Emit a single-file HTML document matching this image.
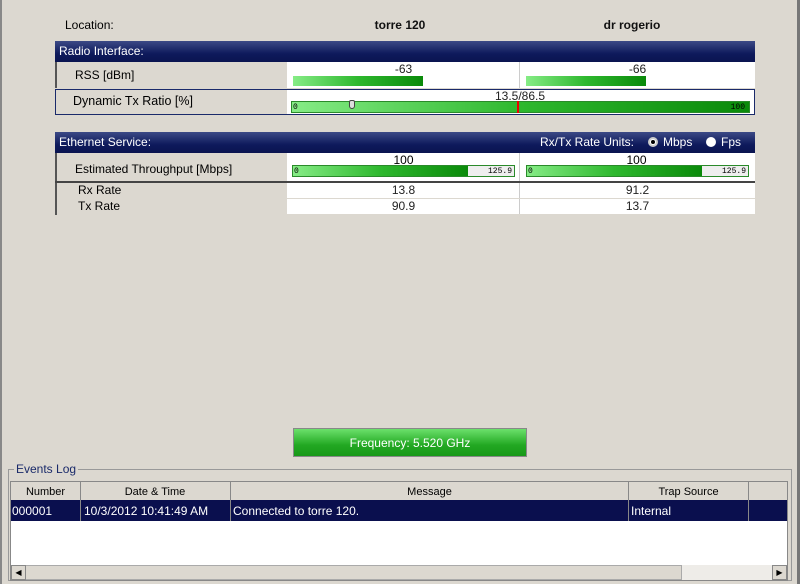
<!DOCTYPE html>
<html><head><style>
*{margin:0;padding:0;box-sizing:border-box}
body{width:800px;height:584px;background:#dcd8d0;font-family:"Liberation Sans",sans-serif;font-size:12px;color:#000;position:relative;overflow:hidden}
.a{position:absolute}
.hdr{background:linear-gradient(#3c4a86,#0e1a5c 60%,#0a1450);color:#fff;font-size:12px;padding:3px 4px}
.lbl{background:#dcd8d0;border-left:2px solid #555}
.w{background:#fff}
.bar{background:linear-gradient(90deg,#86ec86,#2eb82e 50%,#0a8a0a);border:1px solid #2a8a2a}
.c{text-align:center}
.sm{font-size:8px;font-family:"Liberation Mono",monospace}
</style></head><body>
<div class="a" style="left:0;top:0;width:2px;height:584px;background:#888"></div>
<div class="a" style="right:0;top:0;width:3px;height:584px;background:#777"></div>
<div class="a" style="left:65px;top:18px">Location:</div>
<div class="a c" style="left:300px;top:18px;width:200px;font-weight:bold;color:#111">torre 120</div>
<div class="a c" style="left:532px;top:18px;width:200px;font-weight:bold;color:#111">dr rogerio</div>

<div class="a hdr" style="left:55px;top:41px;width:700px;height:21px">Radio Interface:</div>
<div class="a lbl" style="left:55px;top:62px;width:232px;height:26px;padding:6px 0 0 18px">RSS [dBm]</div>
<div class="a w" style="left:287px;top:62px;width:233px;height:26px;border-right:1px solid #ccc"></div>
<div class="a w" style="left:520px;top:62px;width:235px;height:26px"></div>
<div class="a c" style="left:287px;top:62px;width:233px;color:#222">-63</div>
<div class="a c" style="left:520px;top:62px;width:235px;color:#222">-66</div>
<div class="a bar" style="left:293px;top:76px;width:130px;height:10px;border:none"></div>
<div class="a bar" style="left:526px;top:76px;width:120px;height:10px;border:none"></div>

<div class="a" style="left:55px;top:89px;width:700px;height:26px;border:1px solid #1a2a6a;background:#fff"></div>
<div class="a" style="left:56px;top:90px;width:231px;height:24px;background:#dcd8d0;padding:4px 0 0 17px;font-size:12.5px">Dynamic Tx Ratio [%]</div>
<div class="a c" style="left:400px;top:89px;width:240px;color:#222">13.5/86.5</div>
<div class="a bar" style="left:291px;top:101px;width:459px;height:12px"><span class="sm a" style="left:1px;top:1px">0</span><span class="sm a" style="right:4px;top:1px">100</span></div>
<div class="a" style="left:517px;top:101px;width:2px;height:12px;background:#e00;z-index:3"></div>
<div class="a" style="left:349px;top:100px;width:6px;height:9px;background:#ddd;border:1px solid #444;border-radius:2px 2px 3px 3px"></div>

<div class="a hdr" style="left:55px;top:132px;width:700px;height:21px">Ethernet Service:</div>
<div class="a" style="left:540px;top:135px;color:#fff">Rx/Tx Rate Units:</div>
<div class="a" style="left:648px;top:137px;width:10px;height:10px;border-radius:50%;background:#fff;border:2px solid #ccc"><div style="margin:1px;width:4px;height:4px;border-radius:50%;background:#000"></div></div>
<div class="a" style="left:663px;top:135px;color:#fff">Mbps</div>
<div class="a" style="left:706px;top:137px;width:10px;height:10px;border-radius:50%;background:#fff"></div>
<div class="a" style="left:721px;top:135px;color:#fff">Fps</div>

<div class="a lbl" style="left:55px;top:153px;width:232px;height:28px;padding:9px 0 0 18px">Estimated Throughput [Mbps]</div>
<div class="a w" style="left:287px;top:153px;width:233px;height:28px;border-right:1px solid #ccc"></div>
<div class="a w" style="left:520px;top:153px;width:235px;height:28px"></div>
<div class="a c" style="left:287px;top:153px;width:233px">100</div>
<div class="a c" style="left:520px;top:153px;width:233px">100</div>
<div class="a" style="left:292px;top:165px;width:223px;height:12px;border:1px solid #2a8a2a;background:#eee"><div class="bar" style="width:175px;height:10px;border:none"></div><span class="sm a" style="left:1px;top:1px">0</span><span class="sm a" style="right:2px;top:1px">125.9</span></div>
<div class="a" style="left:526px;top:165px;width:223px;height:12px;border:1px solid #2a8a2a;background:#eee"><div class="bar" style="width:175px;height:10px;border:none"></div><span class="sm a" style="left:1px;top:1px">0</span><span class="sm a" style="right:2px;top:1px">125.9</span></div>
<div class="a" style="left:55px;top:181px;width:700px;height:2px;background:#444"></div>

<div class="a lbl" style="left:55px;top:183px;width:232px;height:32px"></div>
<div class="a" style="left:78px;top:183px">Rx Rate</div>
<div class="a" style="left:78px;top:199px">Tx Rate</div>
<div class="a w" style="left:287px;top:183px;width:233px;height:15px;border-right:1px solid #ccc"></div>
<div class="a w" style="left:520px;top:183px;width:235px;height:15px"></div>
<div class="a w" style="left:287px;top:199px;width:233px;height:15px;border-right:1px solid #ccc"></div>
<div class="a w" style="left:520px;top:199px;width:235px;height:15px"></div>
<div class="a c" style="left:287px;top:183px;width:233px;color:#222">13.8</div>
<div class="a c" style="left:520px;top:183px;width:235px;color:#222">91.2</div>
<div class="a c" style="left:287px;top:199px;width:233px;color:#222">90.9</div>
<div class="a c" style="left:520px;top:199px;width:235px;color:#222">13.7</div>

<div class="a c" style="left:293px;top:428px;width:234px;height:29px;border:1px solid #888;background:linear-gradient(#6ce06c,#22a822 60%,#189818);color:#fff;padding-top:7px">Frequency: 5.520 GHz</div>

<div class="a" style="left:8px;top:469px;width:784px;height:112px;border:1px solid #999"></div>
<div class="a" style="left:14px;top:462px;background:#dcd8d0;padding:0 2px;color:#1a2a6a">Events Log</div>
<div class="a" style="left:10px;top:481px;width:778px;height:100px;background:#fff;border:1px solid #888"></div>
<div class="a" style="left:11px;top:482px;width:776px;height:18px;background:#dcd8d0;font-size:11px">
<div class="a c" style="left:0;width:69px;top:4px">Number</div>
<div class="a c" style="left:69px;width:150px;top:4px">Date &amp; Time</div>
<div class="a c" style="left:219px;width:399px;top:4px">Message</div>
<div class="a c" style="left:618px;width:119px;top:4px">Trap Source</div>
</div>
<div class="a" style="left:11px;top:500px;width:776px;height:21px;background:#0a0f4e;color:#fff">
<div class="a" style="left:1px;top:4px">000001</div>
<div class="a" style="left:73px;top:4px">10/3/2012 10:41:49 AM</div>
<div class="a" style="left:222px;top:4px">Connected to torre 120.</div>
<div class="a" style="left:620px;top:4px">Internal</div>
</div>
<div class="a" style="left:80px;top:482px;width:1px;height:39px;background:#888"></div>
<div class="a" style="left:230px;top:482px;width:1px;height:39px;background:#888"></div>
<div class="a" style="left:628px;top:482px;width:1px;height:39px;background:#888"></div>
<div class="a" style="left:748px;top:482px;width:1px;height:39px;background:#888"></div>
<div class="a" style="left:11px;top:565px;width:776px;height:15px;background:#eeece8"></div>
<div class="a" style="left:11px;top:565px;width:671px;height:15px;background:#dcd8d0;border:1px solid #aaa"></div>
<div class="a" style="left:11px;top:565px;width:15px;height:15px;background:#dcd8d0;border:1px solid #888;font-size:8px;text-align:center;line-height:13px">◀</div>
<div class="a" style="left:772px;top:565px;width:15px;height:15px;background:#dcd8d0;border:1px solid #888;font-size:8px;text-align:center;line-height:13px">▶</div>
</body></html>
